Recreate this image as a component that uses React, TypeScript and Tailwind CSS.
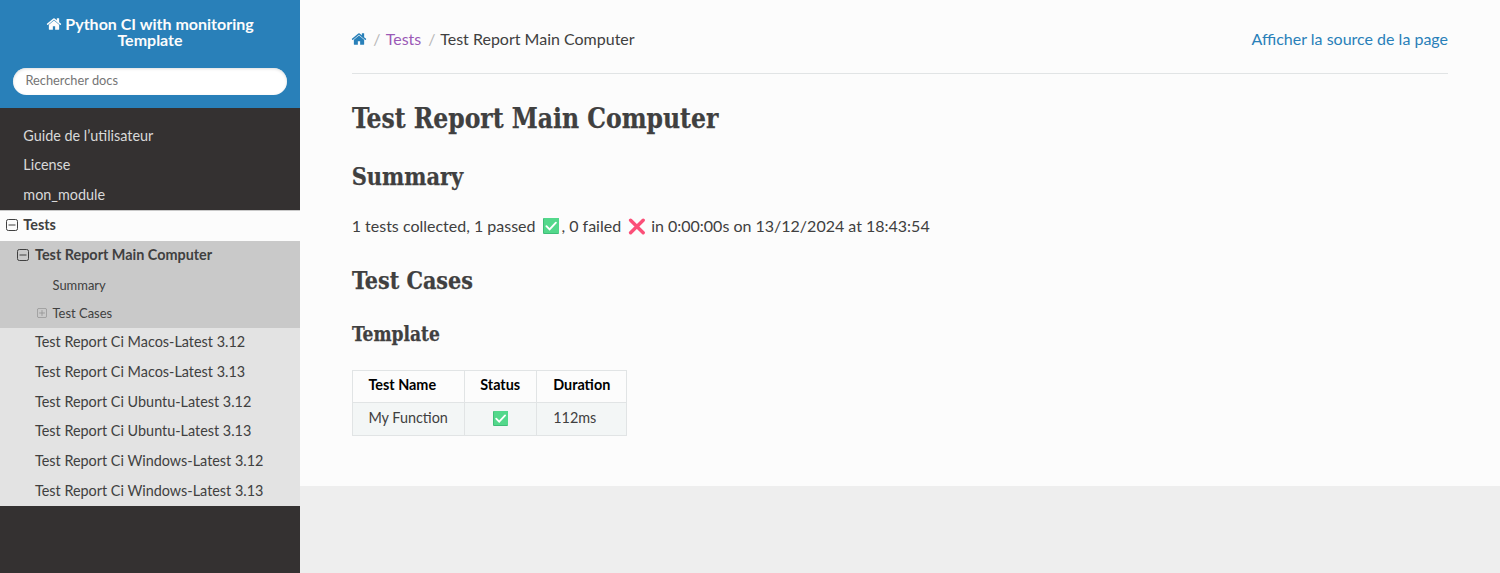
import React from "react";

function HomeIcon({ className }: { className: string }) {
  return (
    <svg viewBox="0 0 1792 1792" fill="currentColor" className={className} aria-hidden="true">
      <path d="M1472 992v480q0 26-19 45t-45 19h-384v-384h-256v384h-384q-26 0-45-19t-19-45v-480q0-1 .5-3t.5-3l575-474 575 474q1 2 1 6zm223-69l-62 74q-8 9-21 11h-3q-13 0-21-7l-692-577-692 577q-12 8-24 7-13-2-21-11l-62-74q-8-10-7-23.5t11-21.5l719-599q32-26 76-26t76 26l244 204v-195q0-14 9-23t23-9h192q14 0 23 9t9 23v408l219 182q10 8 11 21.5t-7 23.5z" />
    </svg>
  );
}

function Toggle({ plus = false, className }: { plus?: boolean; className: string }) {
  return (
    <svg viewBox="0 0 12 12" fill="none" stroke="currentColor" className={className} aria-hidden="true">
      <rect x="0.5" y="0.5" width="11" height="11" rx="1.8" />
      <path d={plus ? "M2.5 6h7M6 2.5v7" : "M2.5 6h7"} />
    </svg>
  );
}

function Check({ className }: { className: string }) {
  return (
    <svg viewBox="0 0 16 16" className={className} aria-label="passed">
      <rect width="16" height="16" rx="1" fill="#3fbd78" />
      <rect x="1" width="15" height="15" rx="0.6" fill="#53d88b" />
      <path d="M3.4 8.2l3.2 3.2 6.3-6.7" fill="none" stroke="#fff" strokeWidth="1.9" strokeLinecap="round" />
    </svg>
  );
}

function Cross({ className }: { className: string }) {
  return (
    <svg viewBox="0 0 18 17" className={className} aria-label="failed">
      <path d="M2.6 2.2l12.6 12.6M15.2 2.2L2.6 14.8" fill="none" stroke="#fb4f78" strokeWidth="3.4" strokeLinecap="round" />
    </svg>
  );
}

const topItems = ["Guide de l’utilisateur", "License", "mon_module"];
const reports = [
  "Test Report Ci Macos-Latest 3.12",
  "Test Report Ci Macos-Latest 3.13",
  "Test Report Ci Ubuntu-Latest 3.12",
  "Test Report Ci Ubuntu-Latest 3.13",
  "Test Report Ci Windows-Latest 3.12",
  "Test Report Ci Windows-Latest 3.13",
];

function Sidebar() {
  return (
    <nav className="h-full w-[300px] shrink-0 bg-[#343131] text-[14.4px] leading-[18px]">
      <div className="flex h-[108px] flex-col items-center bg-[#2980b9] px-[13px] pt-[16px]">
        <div className="text-center text-[16px] leading-4 font-bold text-[#fcfcfc]">
          <HomeIcon className="mr-[3px] inline-block size-4 align-[-2px]" />
          Python CI with monitoring
          <br />
          Template
        </div>
        <input
          className="mt-[20px] h-[27px] w-full rounded-full bg-white px-[12.5px] pb-[3px] text-[12.8px] text-[#555] shadow-[inset_0_1px_3px_#ddd] placeholder:text-[#757575]"
          placeholder="Rechercher docs"
        />
      </div>
      <ul className="pt-[13px]">
        {topItems.map((t) => (
          <li key={t} className="flex h-[29.65px] items-center pl-[23.3px] text-[#d9d9d9]">{t}</li>
        ))}
        <li>
          <div className="flex h-[31px] items-center border-t border-[#c9c9c9] bg-[#fcfcfc] pb-[1.5px] pl-[5.5px] font-bold text-[#404040]">
            <Toggle className="mr-[5.8px] size-3" />
            Tests
          </div>
          <div className="flex h-[29.8px] items-center bg-[#c9c9c9] pb-[1.4px] pl-[17.4px] font-bold text-[#404040]">
            <Toggle className="mr-[5.6px] size-3" />
            Test Report Main Computer
          </div>
          <div className="bg-[#c9c9c9] text-[12.96px] text-[#404040]">
            <div className="flex h-[28.5px] items-center pl-[52.5px]">Summary</div>
            <div className="flex h-[28.5px] items-center pl-[37px]">
              <Toggle plus className="mr-[5.5px] size-[10px] text-[#969696]" />
              Test Cases
            </div>
          </div>
          <ul className="bg-[#e3e3e3] text-[#404040]">
            {reports.map((t) => (
              <li key={t} className="flex h-[29.65px] items-center pb-[0.4px] pl-[35px]">{t}</li>
            ))}
          </ul>
        </li>
      </ul>
    </nav>
  );
}

export default function App() {
  return (
    <div className="flex h-[573px] w-[1500px] overflow-hidden bg-[#eeeeee] font-[Lato,sans-serif] text-[16px] text-[#404040]">
      <Sidebar />
      <main className="h-[486px] flex-1 bg-[#fcfcfc] pr-[52px] pl-[51.7px] pt-[27px]">
        <header className="flex h-[47px] items-start justify-between border-b border-[#e1e4e5] leading-6">
          <div className="flex items-center">
            <HomeIcon className="-ml-[0.7px] mr-[0.7px] size-4 text-[#2980b9]" />
            <span className="w-[18px] pl-[5.5px] text-[#b8b8b8]">/</span>
            <a className="text-[#9b59b6]">Tests</a>
            <span className="w-[19px] pl-[7px] text-[#b8b8b8]">/</span>
            <span>Test Report Main Computer</span>
          </div>
          <a className="text-[#2980b9]">Afficher la source de la page</a>
        </header>
        <div className="font-['Roboto_Slab','DejaVu_Serif_Condensed','DejaVu_Serif',serif] font-bold whitespace-nowrap [-webkit-text-stroke:0.25px_#404040]">
          <h1 className="mt-[25px] h-[40px] text-[27px] leading-10">
            <span className="inline-block origin-left scale-x-[0.968]">Test Report Main Computer</span>
          </h1>
          <h2 className="mt-[20px] h-[36px] text-[23.3px] leading-9">
            <span className="inline-block origin-left">Summary</span>
          </h2>
        </div>
        <p className="mt-[19px] flex h-6 items-center leading-6">
          <span>1 tests collected, 1 passed</span>
          <Check className="ml-[7px] size-4" />
          <span className="ml-[3px]">, 0 failed</span>
          <Cross className="ml-[7px] h-[17px] w-[18px]" />
          <span className="ml-[5px]">in 0:00:00s on 13/12/2024 at 18:43:54</span>
        </p>
        <div className="font-['Roboto_Slab','DejaVu_Serif_Condensed','DejaVu_Serif',serif] font-bold whitespace-nowrap [-webkit-text-stroke:0.25px_#404040]">
          <h2 className="mt-[25px] h-[36px] text-[23.3px] leading-9">
            <span className="inline-block origin-left scale-x-[0.989]">Test Cases</span>
          </h2>
          <h3 className="mt-[19.6px] h-[30px] text-[20px] leading-[30px]">
            <span className="inline-block origin-left scale-x-[0.95]">Template</span>
          </h3>
        </div>
        <table className="mt-[21.4px] w-[275px] table-fixed border-collapse border border-[#e1e4e5] text-left text-[14.4px] leading-4 whitespace-nowrap">
          <colgroup>
            <col className="w-[112px]" />
            <col className="w-[72px]" />
            <col className="w-[90px]" />
          </colgroup>
          <thead className="text-black">
            <tr className="h-[32.5px]">
              <th className="border border-[#e1e4e5] px-[15.7px] pb-[3px]">Test Name</th>
              <th className="border border-[#e1e4e5] pb-[3px] text-center">Status</th>
              <th className="border border-[#e1e4e5] px-[16.5px] pb-[3px]">Duration</th>
            </tr>
          </thead>
          <tbody className="bg-[#f3f6f6]">
            <tr className="h-[32.5px]">
              <td className="border border-[#e1e4e5] px-[15.7px] pb-[2px]">My Function</td>
              <td className="border border-[#e1e4e5] pb-[2px]"><Check className="mx-auto size-[15px]" /></td>
              <td className="border border-[#e1e4e5] px-[16.5px] pb-[2px]">112ms</td>
            </tr>
          </tbody>
        </table>
      </main>
    </div>
  );
}
